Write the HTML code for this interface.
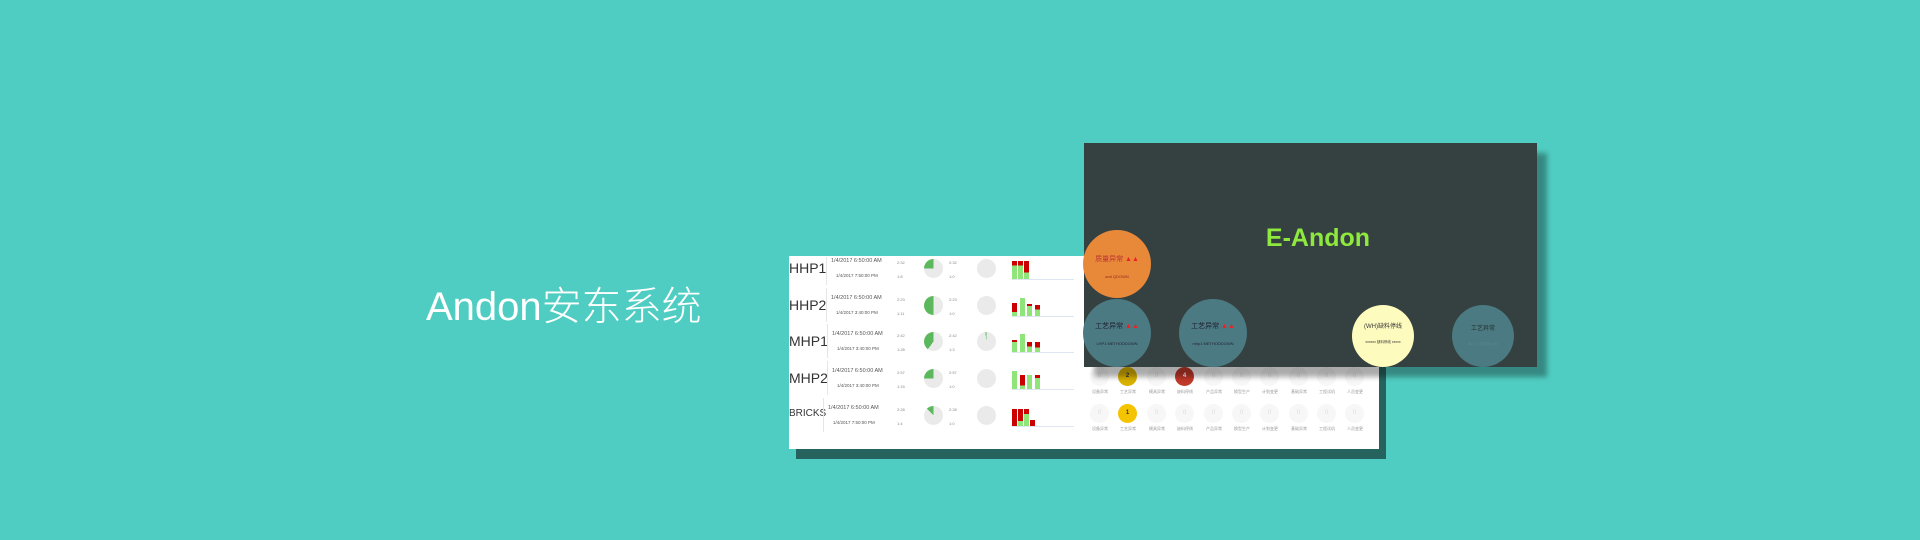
<!DOCTYPE html>
<html><head><meta charset="utf-8"><style>
*{margin:0;padding:0;box-sizing:border-box}
body{width:1920px;height:540px;background:#50cdc2;position:relative;overflow:hidden;font-family:"Liberation Sans","Noto Sans CJK SC",sans-serif}
.a{position:absolute}
.title{left:426px;top:274px;font-size:40px;color:#fff;font-family:"Liberation Sans","Noto Sans CJK SC",sans-serif;font-weight:300;white-space:nowrap}
.wp{left:789px;top:256px;width:590px;height:193px;background:#fff;box-shadow:7px 10px 0 #27635e}
.lab{font-size:14px;color:#333;left:0}
.sep{width:1px;height:34px;background:#e6e6e6}
.d1{font-size:5.5px;color:#555;white-space:nowrap}
.sm{font-size:4px;color:#888}
.pie{width:19px;height:19px;border-radius:50%}
.bar{width:5px;background:#8fe57a}
.axis{height:1px;width:62px;background:#dde6ee}
.dp{left:1084px;top:143px;width:453px;height:224px;background:#354040;box-shadow:10px 10px 5px rgba(0,0,0,0.33)}
.c{border-radius:50%;text-align:center;font-size:7px}
.sc{width:19px;height:19px;border-radius:50%;background:#f7f7f7;color:#ddd;font-size:6px;text-align:center;line-height:19px}
.sl{font-size:4px;color:#999;white-space:nowrap;width:28px;text-align:center}
</style></head><body>
<div class="a title">Andon安东系统</div>

<div class="a wp"></div>

<div class="a lab" style="left:789px;top:260px">HHP1</div>
<div class="a lab" style="left:789px;top:297px">HHP2</div>
<div class="a lab" style="left:789px;top:333px">MHP1</div>
<div class="a lab" style="left:789px;top:370px">MHP2</div>
<div class="a lab" style="left:789px;top:408px;font-size:10px">BRICKS</div>

<div class="a sep" style="left:826px;top:257px;height:28px"></div>
<div class="a sep" style="left:826px;top:288px"></div>
<div class="a sep" style="left:827px;top:324px"></div>
<div class="a sep" style="left:827px;top:361px"></div>
<div class="a sep" style="left:823px;top:398px"></div>

<div class="a d1" style="left:831px;top:258px">1/4/2017 6:50:00 AM</div><div class="a d1" style="left:836px;top:273px;font-size:4.5px">1/4/2017 7:50:00 PM</div>
<div class="a d1" style="left:831px;top:295px">1/4/2017 6:50:00 AM</div><div class="a d1" style="left:836px;top:310px;font-size:4.5px">1/4/2017 3:40:00 PM</div>
<div class="a d1" style="left:832px;top:331px">1/4/2017 6:50:00 AM</div><div class="a d1" style="left:837px;top:346px;font-size:4.5px">1/4/2017 3:40:00 PM</div>
<div class="a d1" style="left:832px;top:368px">1/4/2017 6:50:00 AM</div><div class="a d1" style="left:837px;top:383px;font-size:4.5px">1/4/2017 3:40:00 PM</div>
<div class="a d1" style="left:828px;top:405px">1/4/2017 6:50:00 AM</div><div class="a d1" style="left:833px;top:420px;font-size:4.5px">1/4/2017 7:50:00 PM</div>

<div class="a sm" style="left:897px;top:260px">2:32</div><div class="a sm" style="left:897px;top:274px">1:8</div>
<div class="a sm" style="left:897px;top:297px">2:23</div><div class="a sm" style="left:897px;top:311px">1:11</div>
<div class="a sm" style="left:897px;top:333px">2:42</div><div class="a sm" style="left:897px;top:347px">1:28</div>
<div class="a sm" style="left:897px;top:370px">2:57</div><div class="a sm" style="left:897px;top:384px">1:15</div>
<div class="a sm" style="left:897px;top:407px">2:28</div><div class="a sm" style="left:897px;top:421px">1:4</div>

<div class="a sm" style="left:949px;top:260px">2:32</div><div class="a sm" style="left:949px;top:274px">1:0</div>
<div class="a sm" style="left:949px;top:297px">2:23</div><div class="a sm" style="left:949px;top:311px">1:0</div>
<div class="a sm" style="left:949px;top:333px">2:42</div><div class="a sm" style="left:949px;top:347px">1:3</div>
<div class="a sm" style="left:949px;top:370px">2:57</div><div class="a sm" style="left:949px;top:384px">1:0</div>
<div class="a sm" style="left:949px;top:407px">2:28</div><div class="a sm" style="left:949px;top:421px">1:0</div>

<div class="a pie" style="left:924px;top:259px;background:conic-gradient(#eaeaea 0 75%,#5cb85c 75% 100%)"></div>
<div class="a pie" style="left:924px;top:296px;background:conic-gradient(#eaeaea 0 50%,#5cb85c 50% 100%)"></div>
<div class="a pie" style="left:924px;top:332px;background:conic-gradient(#eaeaea 0 60%,#5cb85c 60% 100%)"></div>
<div class="a pie" style="left:924px;top:369px;background:conic-gradient(#eaeaea 0 75%,#5cb85c 75% 100%)"></div>
<div class="a pie" style="left:924px;top:406px;background:conic-gradient(#eaeaea 0 88%,#5cb85c 88% 100%)"></div>

<div class="a pie" style="left:977px;top:259px;background:#eaeaea"></div>
<div class="a pie" style="left:977px;top:296px;background:#eaeaea"></div>
<div class="a pie" style="left:977px;top:332px;background:conic-gradient(#eaeaea 0 98%,#5cb85c 98% 100%)"></div>
<div class="a pie" style="left:977px;top:369px;background:#eaeaea"></div>
<div class="a pie" style="left:977px;top:406px;background:#eaeaea"></div>

<div class="a bar" style="left:1012px;top:261px;height:18px;background:linear-gradient(#c00 0 25%,#8fe57a 25%)"></div>
<div class="a bar" style="left:1018px;top:261px;height:18px;background:linear-gradient(#c00 0 25%,#8fe57a 25%)"></div>
<div class="a bar" style="left:1024px;top:261px;height:18px;background:linear-gradient(#c00 0 65%,#8fe57a 65%)"></div>
<div class="a axis" style="left:1012px;top:279px"></div>
<div class="a bar" style="left:1012px;top:303px;height:13px;background:linear-gradient(#c00 0 70%,#8fe57a 70%)"></div>
<div class="a bar" style="left:1020px;top:298px;height:18px"></div>
<div class="a bar" style="left:1027px;top:304px;height:12px;background:linear-gradient(#c00 0 15%,#8fe57a 15%)"></div>
<div class="a bar" style="left:1035px;top:305px;height:11px;background:linear-gradient(#c00 0 40%,#8fe57a 40%)"></div>
<div class="a axis" style="left:1012px;top:316px"></div>
<div class="a bar" style="left:1012px;top:340px;height:12px;background:linear-gradient(#c00 0 15%,#8fe57a 15%)"></div>
<div class="a bar" style="left:1020px;top:334px;height:18px"></div>
<div class="a bar" style="left:1027px;top:342px;height:10px;background:linear-gradient(#c00 0 45%,#8fe57a 45%)"></div>
<div class="a bar" style="left:1035px;top:342px;height:10px;background:linear-gradient(#c00 0 55%,#8fe57a 55%)"></div>
<div class="a axis" style="left:1012px;top:352px"></div>
<div class="a bar" style="left:1012px;top:371px;height:18px"></div>
<div class="a bar" style="left:1020px;top:375px;height:14px;background:linear-gradient(#c00 0 75%,#8fe57a 75%)"></div>
<div class="a bar" style="left:1027px;top:375px;height:14px"></div>
<div class="a bar" style="left:1035px;top:375px;height:14px;background:linear-gradient(#c00 0 20%,#8fe57a 20%)"></div>
<div class="a axis" style="left:1012px;top:389px"></div>
<div class="a bar" style="left:1012px;top:409px;height:17px;background:#c00"></div>
<div class="a bar" style="left:1018px;top:409px;height:17px;background:linear-gradient(#c00 0 70%,#8fe57a 70%)"></div>
<div class="a bar" style="left:1024px;top:409px;height:17px;background:linear-gradient(#c00 0 30%,#8fe57a 30%)"></div>
<div class="a bar" style="left:1030px;top:420px;height:6px;background:#c00"></div>
<div class="a axis" style="left:1012px;top:426px"></div>

<div class="a" style="left:1090px;top:367px">
 <div class="a sc" style="left:0">0</div><div class="a sc" style="left:28px;background:#d9b100;color:#333;font-weight:bold">2</div><div class="a sc" style="left:57px">0</div><div class="a sc" style="left:85px;background:#c0392b;color:#fff;font-weight:bold">4</div><div class="a sc" style="left:114px">0</div><div class="a sc" style="left:142px">0</div><div class="a sc" style="left:170px">0</div><div class="a sc" style="left:199px">0</div><div class="a sc" style="left:227px">0</div><div class="a sc" style="left:255px">0</div>
 <div class="a sl" style="left:-4px;top:22px">设备异常</div><div class="a sl" style="left:24px;top:22px">工艺异常</div><div class="a sl" style="left:53px;top:22px">模具异常</div><div class="a sl" style="left:81px;top:22px">缺料停线</div><div class="a sl" style="left:110px;top:22px">产品异常</div><div class="a sl" style="left:138px;top:22px">换型生产</div><div class="a sl" style="left:166px;top:22px">计划变更</div><div class="a sl" style="left:195px;top:22px">基础异常</div><div class="a sl" style="left:223px;top:22px">工程试机</div><div class="a sl" style="left:251px;top:22px">人员变更</div>
</div>
<div class="a" style="left:1090px;top:404px">
 <div class="a sc" style="left:0">0</div><div class="a sc" style="left:28px;background:#f5c400;color:#333;font-weight:bold">1</div><div class="a sc" style="left:57px">0</div><div class="a sc" style="left:85px">0</div><div class="a sc" style="left:114px">0</div><div class="a sc" style="left:142px">0</div><div class="a sc" style="left:170px">0</div><div class="a sc" style="left:199px">0</div><div class="a sc" style="left:227px">0</div><div class="a sc" style="left:255px">0</div>
 <div class="a sl" style="left:-4px;top:22px">设备异常</div><div class="a sl" style="left:24px;top:22px">工艺异常</div><div class="a sl" style="left:53px;top:22px">模具异常</div><div class="a sl" style="left:81px;top:22px">缺料停线</div><div class="a sl" style="left:110px;top:22px">产品异常</div><div class="a sl" style="left:138px;top:22px">换型生产</div><div class="a sl" style="left:166px;top:22px">计划变更</div><div class="a sl" style="left:195px;top:22px">基础异常</div><div class="a sl" style="left:223px;top:22px">工程试机</div><div class="a sl" style="left:251px;top:22px">人员变更</div>
</div>

<div class="a dp"></div>
<div class="a" style="left:1240px;top:224px;width:156px;text-align:center;font-size:25px;font-weight:bold;color:#8ee83e">E-Andon</div>
<div class="a c" style="left:1083px;top:230px;width:68px;height:68px;background:#e8893a;color:#b33"><div style="margin-top:24px">质量异常 <span style="color:#e22">▲▲</span></div><div style="font-size:4px;margin-top:10px;color:#922">and QDOWN</div></div>
<div class="a c" style="left:1083px;top:299px;width:68px;height:68px;background:#4b7a82;color:#223"><div style="margin-top:22px">工艺异常 <span style="color:#e22">▲▲</span></div><div style="font-size:4px;margin-top:10px">LHP1 METHODDOWN</div></div>
<div class="a c" style="left:1179px;top:299px;width:68px;height:68px;background:#4b7a82;color:#223"><div style="margin-top:22px">工艺异常 <span style="color:#e22">▲▲</span></div><div style="font-size:4px;margin-top:10px">mhp1 METHODDOWN</div></div>
<div class="a c" style="left:1352px;top:305px;width:62px;height:62px;background:#fefbbf;color:#333"><div style="margin-top:16px;font-size:6px">(WH)缺料停线</div><div style="font-size:3.5px;margin-top:10px">xxxxxx 缺料停线 xxxxx</div></div>
<div class="a c" style="left:1452px;top:305px;width:62px;height:62px;background:#4b7a82;color:#233"><div style="margin-top:18px;font-size:6px">工艺异常</div><div style="font-size:3.5px;margin-top:10px;color:#5a8a90">BDS 工艺异常 xxxx</div></div>
</body></html>
